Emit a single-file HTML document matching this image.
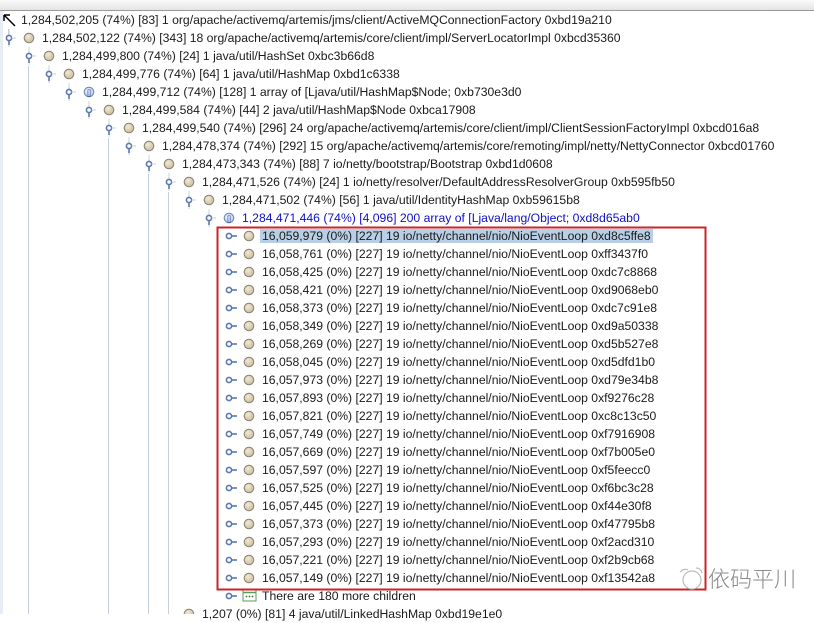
<!DOCTYPE html>
<html><head><meta charset="utf-8"><style>
*{margin:0;padding:0}
body{width:814px;height:614px;overflow:hidden;background:#fff;position:relative;font-family:"Liberation Sans",Arial,sans-serif;font-size:12.2px;color:#1a1a1a}
.hdr{position:absolute;left:0;top:0;width:814px;height:10px;background:linear-gradient(#fafafa,#e4e4e4);border-bottom:1px solid #9a9a9a}
.r{position:absolute;height:18px;line-height:18px;white-space:nowrap}
.vl{position:absolute;width:1px;background:#c4d0dc;bottom:0}
svg{position:absolute}
.sel{background:#b9cfe6;padding:0 2px;margin-left:-2px}
</style></head><body>
<div class="hdr"></div>
<div style="position:absolute;left:0;top:11px;width:3px;height:603px;background:#e6edf5"></div>
<div class="vl" style="left:28px;top:66px"></div>
<div class="vl" style="left:108px;top:138px"></div>
<div class="vl" style="left:148px;top:174px"></div>
<div class="vl" style="left:168px;top:192px"></div>
<div class="vl" style="left:8px;top:29px;height:10px"></div>

<svg width="814" height="614" style="left:0;top:0">
<defs>
<radialGradient id="g" cx="40%" cy="35%" r="70%"><stop offset="0" stop-color="#f2ead8"/><stop offset="1" stop-color="#c8b898"/></radialGradient>
<radialGradient id="b" cx="40%" cy="35%" r="70%"><stop offset="0" stop-color="#f4f8ff"/><stop offset="1" stop-color="#b8c8e8"/></radialGradient>
<g id="kx"><line x1="0" y1="-9" x2="0" y2="9" stroke="#c4d0dc"/><circle r="2.6" fill="#fff" stroke="#5a78b0" stroke-width="1.6"/><line x1="0" y1="2.6" x2="0" y2="7" stroke="#5a78b0" stroke-width="1.6"/><line x1="2.6" y1="0" x2="7" y2="0" stroke="#c4d0dc"/></g>
<g id="kl"><circle r="2.6" fill="#fff" stroke="#5a78b0" stroke-width="1.6"/><line x1="2.6" y1="0" x2="8" y2="0" stroke="#5a78b0" stroke-width="1.6"/></g>
<g id="o"><circle r="4.8" fill="url(#g)" stroke="#8a8270"/></g>
<g id="a"><circle r="4.8" fill="url(#b)" stroke="#6a84b8"/><text x="0" y="3" font-size="7" text-anchor="middle" fill="#2040a0" font-family="Liberation Sans">[]</text></g>
</defs>
<path d="M4 15 L15 26 M4 15 L4 21 M4 15 L10 15" stroke="#000" stroke-width="1.5" fill="none"/>
<use href="#kx" x="9" y="38"/><use href="#o" x="29" y="38"/>
<use href="#kx" x="29" y="56"/><use href="#o" x="49" y="56"/>
<use href="#kx" x="49" y="74"/><use href="#o" x="69" y="74"/>
<use href="#kx" x="69" y="92"/><use href="#a" x="89" y="92"/>
<use href="#kx" x="89" y="110"/><use href="#o" x="109" y="110"/>
<use href="#kx" x="109" y="128"/><use href="#o" x="129" y="128"/>
<use href="#kx" x="129" y="146"/><use href="#o" x="149" y="146"/>
<use href="#kx" x="149" y="164"/><use href="#o" x="169" y="164"/>
<use href="#kx" x="169" y="182"/><use href="#o" x="189" y="182"/>
<use href="#kx" x="189" y="200"/><use href="#o" x="209" y="200"/>
<use href="#kx" x="209" y="218"/><use href="#a" x="229" y="218"/>
<g id="kids">
<use href="#kl" x="229" y="236"/><use href="#o" x="249" y="236"/>
<use href="#kl" x="229" y="254"/><use href="#o" x="249" y="254"/>
<use href="#kl" x="229" y="272"/><use href="#o" x="249" y="272"/>
<use href="#kl" x="229" y="290"/><use href="#o" x="249" y="290"/>
<use href="#kl" x="229" y="308"/><use href="#o" x="249" y="308"/>
<use href="#kl" x="229" y="326"/><use href="#o" x="249" y="326"/>
<use href="#kl" x="229" y="344"/><use href="#o" x="249" y="344"/>
<use href="#kl" x="229" y="362"/><use href="#o" x="249" y="362"/>
<use href="#kl" x="229" y="380"/><use href="#o" x="249" y="380"/>
<use href="#kl" x="229" y="398"/><use href="#o" x="249" y="398"/>
<use href="#kl" x="229" y="416"/><use href="#o" x="249" y="416"/>
<use href="#kl" x="229" y="434"/><use href="#o" x="249" y="434"/>
<use href="#kl" x="229" y="452"/><use href="#o" x="249" y="452"/>
<use href="#kl" x="229" y="470"/><use href="#o" x="249" y="470"/>
<use href="#kl" x="229" y="488"/><use href="#o" x="249" y="488"/>
<use href="#kl" x="229" y="506"/><use href="#o" x="249" y="506"/>
<use href="#kl" x="229" y="524"/><use href="#o" x="249" y="524"/>
<use href="#kl" x="229" y="542"/><use href="#o" x="249" y="542"/>
<use href="#kl" x="229" y="560"/><use href="#o" x="249" y="560"/>
<use href="#kl" x="229" y="578"/><use href="#o" x="249" y="578"/>
<use href="#kl" x="229" y="596"/>
</g>
<rect x="243" y="590" width="13" height="11" fill="#fff" stroke="#5a9a5a"/>
<line x1="243" y1="592.5" x2="256" y2="592.5" stroke="#5a9a5a" stroke-width="1.5"/>
<circle cx="246.5" cy="596.5" r="0.9" fill="#2a7a2a"/><circle cx="249.5" cy="596.5" r="0.9" fill="#2a7a2a"/><circle cx="252.5" cy="596.5" r="0.9" fill="#2a7a2a"/>
<use href="#o" x="189" y="614"/>
<rect x="217.5" y="227.5" width="488" height="362" fill="none" stroke="#c8262a" stroke-width="2"/>
<g stroke="#bbb" fill="none" stroke-width="1.2"><circle cx="692" cy="580" r="9"/><path d="M680 572 q4 -4 8 -2 M696 568 q5 0 6 5"/></g>
</svg>

<div class="r" style="left:21px;top:11px">1,284,502,205 (74%) [83] 1 org/apache/activemq/artemis/jms/client/ActiveMQConnectionFactory 0xbd19a210</div>
<div class="r" style="left:42px;top:29px">1,284,502,122 (74%) [343] 18 org/apache/activemq/artemis/core/client/impl/ServerLocatorImpl 0xbcd35360</div>
<div class="r" style="left:62px;top:47px">1,284,499,800 (74%) [24] 1 java/util/HashSet 0xbc3b66d8</div>
<div class="r" style="left:82px;top:65px">1,284,499,776 (74%) [64] 1 java/util/HashMap 0xbd1c6338</div>
<div class="r" style="left:102px;top:83px">1,284,499,712 (74%) [128] 1 array of [Ljava/util/HashMap$Node; 0xb730e3d0</div>
<div class="r" style="left:122px;top:101px">1,284,499,584 (74%) [44] 2 java/util/HashMap$Node 0xbca17908</div>
<div class="r" style="left:142px;top:119px">1,284,499,540 (74%) [296] 24 org/apache/activemq/artemis/core/client/impl/ClientSessionFactoryImpl 0xbcd016a8</div>
<div class="r" style="left:162px;top:137px">1,284,478,374 (74%) [292] 15 org/apache/activemq/artemis/core/remoting/impl/netty/NettyConnector 0xbcd01760</div>
<div class="r" style="left:182px;top:155px">1,284,473,343 (74%) [88] 7 io/netty/bootstrap/Bootstrap 0xbd1d0608</div>
<div class="r" style="left:202px;top:173px">1,284,471,526 (74%) [24] 1 io/netty/resolver/DefaultAddressResolverGroup 0xb595fb50</div>
<div class="r" style="left:222px;top:191px">1,284,471,502 (74%) [56] 1 java/util/IdentityHashMap 0xb59615b8</div>
<div class="r" style="left:242px;top:209px;color:#1010c8">1,284,471,446 (74%) [4,096] 200 array of [Ljava/lang/Object; 0xd8d65ab0</div>
<div class="r" style="left:262px;top:227px"><span class="sel">16,059,979 (0%) [227] 19 io/netty/channel/nio/NioEventLoop 0xd8c5ffe8</span></div>
<div class="r" style="left:262px;top:245px">16,058,761 (0%) [227] 19 io/netty/channel/nio/NioEventLoop 0xff3437f0</div>
<div class="r" style="left:262px;top:263px">16,058,425 (0%) [227] 19 io/netty/channel/nio/NioEventLoop 0xdc7c8868</div>
<div class="r" style="left:262px;top:281px">16,058,421 (0%) [227] 19 io/netty/channel/nio/NioEventLoop 0xd9068eb0</div>
<div class="r" style="left:262px;top:299px">16,058,373 (0%) [227] 19 io/netty/channel/nio/NioEventLoop 0xdc7c91e8</div>
<div class="r" style="left:262px;top:317px">16,058,349 (0%) [227] 19 io/netty/channel/nio/NioEventLoop 0xd9a50338</div>
<div class="r" style="left:262px;top:335px">16,058,269 (0%) [227] 19 io/netty/channel/nio/NioEventLoop 0xd5b527e8</div>
<div class="r" style="left:262px;top:353px">16,058,045 (0%) [227] 19 io/netty/channel/nio/NioEventLoop 0xd5dfd1b0</div>
<div class="r" style="left:262px;top:371px">16,057,973 (0%) [227] 19 io/netty/channel/nio/NioEventLoop 0xd79e34b8</div>
<div class="r" style="left:262px;top:389px">16,057,893 (0%) [227] 19 io/netty/channel/nio/NioEventLoop 0xf9276c28</div>
<div class="r" style="left:262px;top:407px">16,057,821 (0%) [227] 19 io/netty/channel/nio/NioEventLoop 0xc8c13c50</div>
<div class="r" style="left:262px;top:425px">16,057,749 (0%) [227] 19 io/netty/channel/nio/NioEventLoop 0xf7916908</div>
<div class="r" style="left:262px;top:443px">16,057,669 (0%) [227] 19 io/netty/channel/nio/NioEventLoop 0xf7b005e0</div>
<div class="r" style="left:262px;top:461px">16,057,597 (0%) [227] 19 io/netty/channel/nio/NioEventLoop 0xf5feecc0</div>
<div class="r" style="left:262px;top:479px">16,057,525 (0%) [227] 19 io/netty/channel/nio/NioEventLoop 0xf6bc3c28</div>
<div class="r" style="left:262px;top:497px">16,057,445 (0%) [227] 19 io/netty/channel/nio/NioEventLoop 0xf44e30f8</div>
<div class="r" style="left:262px;top:515px">16,057,373 (0%) [227] 19 io/netty/channel/nio/NioEventLoop 0xf47795b8</div>
<div class="r" style="left:262px;top:533px">16,057,293 (0%) [227] 19 io/netty/channel/nio/NioEventLoop 0xf2acd310</div>
<div class="r" style="left:262px;top:551px">16,057,221 (0%) [227] 19 io/netty/channel/nio/NioEventLoop 0xf2b9cb68</div>
<div class="r" style="left:262px;top:569px">16,057,149 (0%) [227] 19 io/netty/channel/nio/NioEventLoop 0xf13542a8</div>
<div class="r" style="left:262px;top:587px">There are 180 more children</div>
<div class="r" style="left:202px;top:605px">1,207 (0%) [81] 4 java/util/LinkedHashMap 0xbd19e1e0</div>
<div class="r" style="left:708px;top:566px;height:28px;line-height:28px;font-size:22px;color:#8a8a8a;font-family:'Liberation Sans','Noto Sans CJK SC',sans-serif;font-weight:300">依码平川</div>
</body></html>
